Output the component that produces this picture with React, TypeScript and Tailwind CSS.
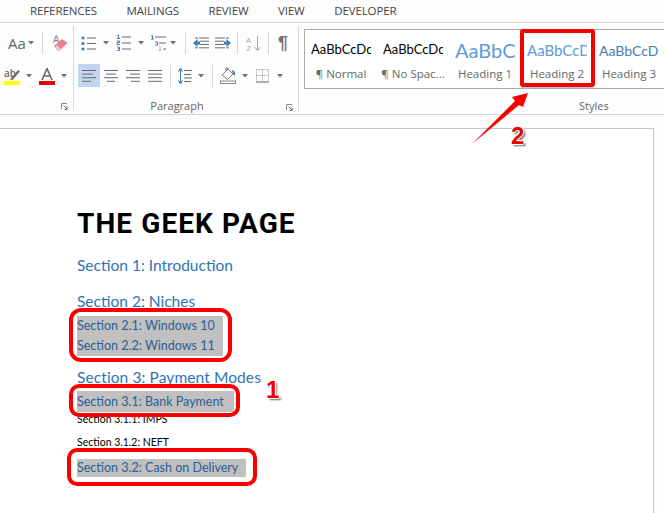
import React from "react";

const G = "#6a6a6a";
const B = "#3f7cbc";

function Caret({ className = "" }: { className?: string }) {
  return (
    <svg width="6" height="4" viewBox="0 0 6 4" className={`shrink-0 ${className}`}>
      <path d="M0 0H6L3 3.5Z" fill="#707070" />
    </svg>
  );
}

function Sep({ className = "" }: { className?: string }) {
  return <div className={`w-px h-[22px] bg-[#d8d8d8] shrink-0 ${className}`} />;
}

function Launcher() {
  return (
    <svg width="7" height="7" viewBox="0 0 7 7" className="shrink-0">
      <path d="M0.5 6V0.5H6" fill="none" stroke="#8a8a8a" />
      <path d="M2.5 2.5L6 6M6 3.5V6.5H3.5" fill="none" stroke="#6a6a6a" />
    </svg>
  );
}

function Lines({ rows }: { rows: [number, number][] }) {
  return (
    <svg width="14" height="13" viewBox="0 0 14 13" className="shrink-0">
      {rows.map(([x, w], i) => (
        <rect key={i} x={x} y={1 + i * 3.6} width={w} height="1" fill={G} />
      ))}
    </svg>
  );
}

const Bullets = () => (
  <svg width="15" height="15" viewBox="0 0 15 15" className="shrink-0">
    {[2, 7.5, 13].map((y) => (
      <g key={y}>
        <circle cx="2" cy={y} r="1.6" fill={B} />
        <rect x="6" y={y - 0.5} width="9" height="1" fill={G} />
      </g>
    ))}
  </svg>
);

const Numbered = () => (
  <svg width="15" height="16" viewBox="0 0 15 16" className="shrink-0">
    {[1.5, 7.5, 13.5].map((y, i) => (
      <g key={y}>
        <path
          d={
            i === 0
              ? `M1 ${y - 0.5}L2.5 ${y - 1.5}V${y + 2}M1 ${y + 2}H4`
              : i === 1
              ? `M1 ${y - 1.5}H3.5V${y}H1V${y + 2}H4`
              : `M1 ${y - 1.5}H3.5V${y + 2}H1M2 ${y}H3.5`
          }
          fill="none"
          stroke={B}
          strokeWidth="1"
        />
        <rect x="6" y={y} width="9" height="1" fill={G} />
      </g>
    ))}
  </svg>
);

const Multi = () => (
  <svg width="16" height="16" viewBox="0 0 16 16" className="shrink-0">
    <path d="M1 1L2.5 0.5V4M1 4H4" fill="none" stroke={B} />
    <rect x="5" y="1.5" width="11" height="1" fill={G} />
    <path d="M5 7H7.5V10H5" fill="none" stroke={B} />
    <rect x="9" y="7.5" width="7" height="1" fill={G} />
    <path d="M10 13.5V16M10 11.5V12.5" fill="none" stroke={B} />
    <rect x="13" y="13.5" width="3" height="1" fill={G} />
  </svg>
);

const Indent = ({ flip }: { flip?: boolean }) => (
  <svg width="16" height="12" viewBox="0 0 16 12" className="shrink-0">
    <g transform={flip ? "translate(16 0) scale(-1 1)" : undefined}>
      <rect x="2" y="0.5" width="3" height="1" fill={G} />
      <rect x="6" y="0.5" width="10" height="1" fill={G} />
      <rect x="7" y="3.7" width="9" height="1" fill={G} />
      <rect x="7" y="7" width="9" height="1" fill={G} />
      <rect x="2" y="10.3" width="3" height="1" fill={G} />
      <rect x="6" y="10.3" width="10" height="1" fill={G} />
      <path d="M0 6L4.5 2V4.5H7V7.5H4.5V10Z" fill={B} />
    </g>
  </svg>
);

const Eraser = () => (
  <svg width="16" height="17" viewBox="0 0 16 17" className="shrink-0 overflow-visible">
    <path d="M5 16L1 11L9 4L14.5 8L7 15Z" fill="#ee7b8b" transform="translate(1 0)" />
    <path d="M3 12L7 16L9 14L5 10Z" fill="#f7c3c9" />
    <text x="1" y="8" fontSize="10" fill="#7a7a7a" fontFamily="Open Sans, sans-serif">A</text>
  </svg>
);

const Sort = () => (
  <svg width="15" height="17" viewBox="0 0 15 17" className="shrink-0 overflow-visible">
    <text x="0" y="8" fontSize="8" fill="#a8a8a8" fontFamily="Open Sans, sans-serif">A</text>
    <text x="0.5" y="16" fontSize="8" fill="#a8a8a8" fontFamily="Open Sans, sans-serif">Z</text>
    <path d="M11.5 1V15M8.5 12L11.5 15.5L14.5 12" fill="none" stroke="#a8a8a8" />
  </svg>
);

const Highlighter = () => (
  <svg width="16" height="17" viewBox="0 0 16 17" className="shrink-0 overflow-visible">
    <text x="0" y="9" fontSize="10" fill="#6a6a6a" fontWeight="600" fontFamily="Open Sans, sans-serif">ab</text>
    <path d="M7 10L14 2L16 3.5L9 11.5L6 12.5Z" fill="#707070" />
    <rect x="0" y="13" width="16" height="4" fill="#ffff00" />
  </svg>
);

const FontColor = () => (
  <svg width="16" height="17" viewBox="0 0 16 17" className="shrink-0">
    <path d="M3 12L8 0.5L13 12M5 8H11" fill="none" stroke="#686868" strokeWidth="1.6" />
    <rect x="0" y="13" width="16" height="4" fill="#f00000" />
  </svg>
);

const Spacing = () => (
  <svg width="14" height="16" viewBox="0 0 14 16" className="shrink-0">
    <path d="M0.5 3.5L2.5 0.5L4.5 3.5M0.5 12.5L2.5 15.5L4.5 12.5" fill="none" stroke={B} strokeWidth="1.2" />
    <rect x="2" y="2" width="1" height="12" fill={B} />
    <rect x="6" y="2" width="8" height="1" fill={G} />
    <rect x="6" y="6" width="7" height="1" fill={G} />
    <rect x="6" y="9.5" width="8" height="1" fill={G} />
    <rect x="6" y="13" width="7" height="1" fill={G} />
  </svg>
);

const Shading = () => (
  <svg width="16" height="17" viewBox="0 0 16 17" className="shrink-0">
    <path d="M2 8L8 2L13 7L7.5 12.5Z" fill="#fff" stroke="#7a7a7a" />
    <path d="M6 4V1H8V3" fill="none" stroke="#7a7a7a" />
    <path d="M12 3Q16 4 15 9L13 7Z" fill={B} />
    <rect x="0.5" y="14" width="15" height="2.5" fill="#fff" stroke="#8a8a8a" />
  </svg>
);

const Borders = () => (
  <svg width="13" height="14" viewBox="0 0 13 14" className="shrink-0">
    <path
      d="M0.5 0.5H12.5M0.5 0.5V12.5M12.5 0.5V12.5M6.5 0.5V12.5M0.5 6.5H12.5"
      fill="none"
      stroke="#9a9a9a"
      strokeDasharray="1 1"
    />
    <rect x="0" y="12.5" width="13" height="1" fill="#666" />
  </svg>
);

function StyleCard({
  sample,
  label,
  sampleClass,
  hot,
}: {
  sample: string;
  label: string;
  sampleClass: string;
  hot?: boolean;
}) {
  return (
    <div
      className={`w-[72px] shrink-0 h-full flex flex-col items-center border ${
        hot ? "border-[#a9cdec]" : "border-transparent"
      }`}
    >
      <div className="w-[60px] h-[32px] mt-[3px] flex items-center overflow-hidden whitespace-nowrap">
        <span className={sampleClass}>{sample}</span>
      </div>
      <div className="text-[11.5px] leading-[16px] text-[#666] whitespace-nowrap font-['Open_Sans',sans-serif]">
        {label}
      </div>
    </div>
  );
}

function RedBox({ className }: { className: string }) {
  return <div className={`absolute border-[4px] border-[#f80000] pointer-events-none ${className}`} />;
}

function Badge({ children, className }: { children: string; className: string }) {
  return (
    <div
      className={`absolute text-[#f00000] text-[24px] font-bold leading-none font-['Liberation_Sans',sans-serif] [text-shadow:-1px_0_0_#fff,1px_0_0_#fff,0_-1px_0_#fff,0_1px_0_#fff,-1px_-1px_0_#fff,1px_-1px_0_#fff,-1px_1px_0_#fff,2px_2px_2px_#666] ${className}`}
    >
      {children}
    </div>
  );
}

export default function App() {
  return (
    <div className="relative w-[664px] h-[513px] overflow-hidden bg-[#fdfdfd] font-['Open_Sans',sans-serif]">
      {/* Tabs */}
      <div className="h-[23px] border-b border-[#d4d4d4] flex items-center text-[11.5px] text-[#444] pl-[30px] gap-[29.5px] tracking-[-0.1px] whitespace-nowrap pb-[1px]">
        <span>REFERENCES</span>
        <span>MAILINGS</span>
        <span>REVIEW</span>
        <span>VIEW</span>
        <span>DEVELOPER</span>
      </div>

      {/* Ribbon */}
      <div className="h-[92px] border-b border-[#d4d4d4] flex overflow-hidden">
        {/* Font group */}
        <div className="w-[74px] shrink-0 border-r border-[#d8d8d8] my-[3px] relative flex flex-col">
          <div className="h-[26px] mt-[4px] flex items-center">
            <Sep className="-ml-px" />
            <span className="ml-[8px] w-[15px] text-[15px] leading-none text-[#666]">Aa</span>
            <Caret className="ml-[5px]" />
            <Sep className="ml-[8px]" />
            <div className="ml-[9px]">
              <Eraser />
            </div>
          </div>
          <div className="h-[26px] mt-[7px] flex items-center">
            <div className="ml-[4px]">
              <Highlighter />
            </div>
            <Caret className="ml-[6px]" />
            <div className="ml-[7px]">
              <FontColor />
            </div>
            <Caret className="ml-[6px]" />
          </div>
          <div className="mt-auto mb-[1px] flex justify-end pr-[5px]">
            <Launcher />
          </div>
        </div>

        {/* Paragraph group */}
        <div className="w-[225px] shrink-0 border-r border-[#d8d8d8] my-[3px] flex flex-col">
          <div className="h-[26px] mt-[4px] flex items-center">
            <div className="ml-[7px]">
              <Bullets />
            </div>
            <Caret className="ml-[7px]" />
            <div className="ml-[7px]">
              <Numbered />
            </div>
            <Caret className="ml-[7px]" />
            <div className="ml-[6px]">
              <Multi />
            </div>
            <Caret className="ml-[4px]" />
            <Sep className="ml-[9px]" />
            <div className="ml-[7px]">
              <Indent />
            </div>
            <div className="ml-[6px]">
              <Indent flip />
            </div>
            <Sep className="ml-[6px]" />
            <div className="ml-[8px]">
              <Sort />
            </div>
            <Sep className="ml-[7px]" />
            <span className="ml-[9px] text-[18px] leading-none text-[#707070] font-['Liberation_Sans',sans-serif] font-bold">
              ¶
            </span>
          </div>
          <div className="h-[23px] mt-[8px] flex items-center">
            <div className="ml-[4px] w-[22px] h-[23px] bg-[#c3d6f1] flex items-center justify-center">
              <Lines rows={[[0, 14], [0, 11], [0, 14], [0, 9]]} />
            </div>
            <div className="ml-[4px]">
              <Lines rows={[[0, 14], [2, 10], [0, 14], [3, 8]]} />
            </div>
            <div className="ml-[8px]">
              <Lines rows={[[0, 14], [4, 10], [0, 14], [5, 9]]} />
            </div>
            <div className="ml-[8px]">
              <Lines rows={[[0, 14], [0, 14], [0, 14], [0, 14]]} />
            </div>
            <Sep className="ml-[8px]" />
            <div className="ml-[7px]">
              <Spacing />
            </div>
            <Caret className="ml-[6px]" />
            <Sep className="ml-[8px]" />
            <div className="ml-[7px]">
              <Shading />
            </div>
            <Caret className="ml-[6px]" />
            <div className="ml-[8px]">
              <Borders />
            </div>
            <Caret className="ml-[8px]" />
          </div>
          <div className="mt-auto -mb-[3px] h-[17px] flex items-center relative">
            <span className="flex-1 text-center text-[11px] leading-none text-[#666] pr-[18px]">Paragraph</span>
            <div className="absolute right-[5px] bottom-[3px]">
              <Launcher />
            </div>
          </div>
        </div>

        {/* Styles group */}
        <div className="flex-1 min-w-0 flex flex-col pl-[5px] my-[3px] relative">
          <div className="h-[60px] mt-[3px] -mr-[20px] border border-[#ababab] bg-white flex">
            <StyleCard sample="AaBbCcDc" label="¶ Normal" sampleClass="text-[13px] text-black font-['Lato',sans-serif]" />
            <StyleCard sample="AaBbCcDc" label="¶ No Spac..." sampleClass="text-[13px] text-black font-['Lato',sans-serif]" />
            <StyleCard sample="AaBbCc" label="Heading 1" sampleClass="text-[20px] text-[#5b9bd9] font-['Lato',sans-serif]" />
            <StyleCard sample="AaBbCcD" label="Heading 2" sampleClass="text-[15px] text-[#5b9bd9] font-['Lato',sans-serif]" hot />
            <StyleCard sample="AaBbCcD" label="Heading 3" sampleClass="text-[14px] text-[#3f80bd] font-['Lato',sans-serif]" />
          </div>
          <div className="mt-auto -mb-[3px] h-[17px] flex items-center pl-[275px]">
            <span className="text-[11px] leading-none text-[#666]">Styles</span>
          </div>
        </div>
      </div>

      {/* Document */}
      <div className="h-[13px]" />
      <div className="w-[654px] h-[400px] bg-white border-t border-r border-[#c6c6c6] pl-[77px] font-['Lato',sans-serif]">
        <h1 className="mt-[78px] text-[28px] leading-[34px] font-bold text-black tracking-[1.1px] font-['Roboto',sans-serif] whitespace-nowrap">
          THE GEEK PAGE
        </h1>
        <div className="mt-[14px] text-[15.5px] leading-[20px] text-[#2e74b5]">Section 1: Introduction</div>
        <div className="mt-[16px] text-[15.5px] leading-[20px] text-[#2e74b5]">Section 2: Niches</div>
        <div className="mt-[5px] text-[12.5px] leading-[20px] text-[#2a5f94] w-[146px] bg-[#c0c0c0]">
          Section 2.1: Windows 10
          <br />
          Section 2.2: Windows 11
        </div>
        <div className="mt-[11px] text-[15.5px] leading-[20px] tracking-[0.1px] text-[#2e74b5]">Section 3: Payment Modes</div>
        <div className="mt-[4px] text-[12.5px] leading-[21px] text-[#2a5f94] w-[157px] bg-[#c0c0c0]">
          Section 3.1: Bank Payment
        </div>
        <div className="mt-[-1px] text-[10.5px] leading-[16px] text-black">Section 3.1.1: IMPS</div>
        <div className="mt-[7px] text-[10.5px] leading-[16px] text-black">Section 3.1.2: NEFT</div>
        <div className="mt-[9px] text-[12.5px] leading-[18px] text-[#2a5f94] w-[169px] bg-[#c0c0c0]">
          Section 3.2: Cash on Delivery
        </div>
      </div>

      {/* Annotations */}
      <RedBox className="left-[520px] top-[29px] w-[75px] h-[58px] rounded-[3px]" />
      <RedBox className="left-[69px] top-[308px] w-[163px] h-[54px] rounded-[12px]" />
      <RedBox className="left-[69px] top-[384px] w-[171px] h-[33px] rounded-[10px]" />
      <RedBox className="left-[67px] top-[448px] w-[190px] h-[38px] rounded-[10px]" />
      <svg width="70" height="65" viewBox="0 0 70 65" className="absolute left-[465px] top-[87px]">
        <path d="M7 57L50 14L47 10L63 6L58 20L54 18Z" fill="#f60000" />
      </svg>
      <Badge className="left-[511px] top-[124px]">2</Badge>
      <Badge className="left-[266px] top-[378px]">1</Badge>
    </div>
  );
}
